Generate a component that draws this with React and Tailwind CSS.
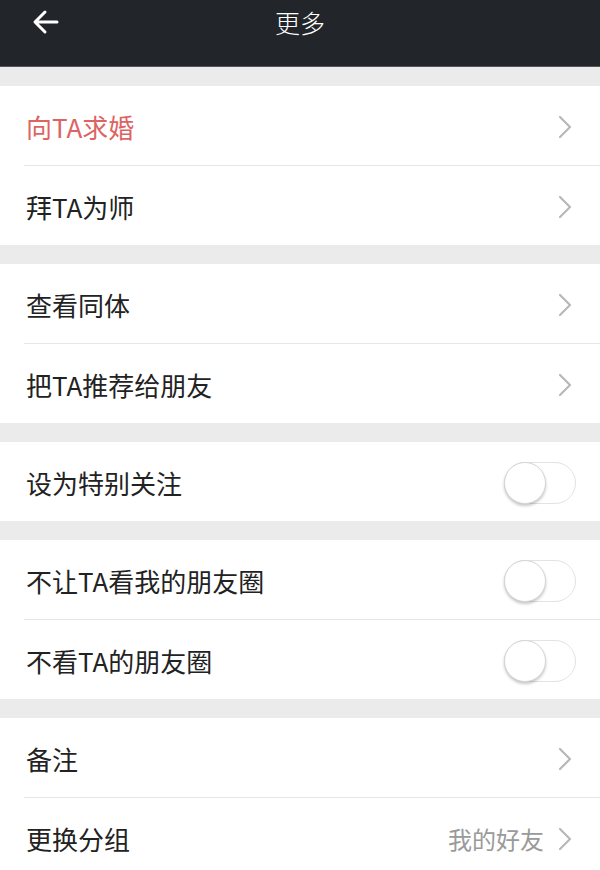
import React, { useState } from "react";

const FONT = { fontFamily: '"Noto Sans CJK SC", "Noto Sans", sans-serif' };

const Chevron = () => (
  <svg width="14" height="24" viewBox="0 0 14 24" className="flex-shrink-0">
    <path d="M2 2 L12 12 L2 22" fill="none" stroke="#b8b8b8" strokeWidth="2.2" strokeLinecap="round" strokeLinejoin="round" />
  </svg>
);

const Toggle = ({ on, onClick }) => (
  <button
    onClick={onClick}
    className={`relative w-[72px] h-[42px] rounded-full border border-[#e3e3e3] transition-all ${on ? "bg-[#4cd964]" : "bg-white"}`}
  >
    <span
      className={`absolute top-[-1px] w-[42px] h-[42px] rounded-full bg-white border border-[#d6d6d6] shadow-[0_2px_3px_rgba(0,0,0,0.22)] transition-all ${on ? "left-[29px]" : "left-[-1px]"}`}
    />
  </button>
);

const Row = ({ label, red, value, toggle, divider }) => {
  const [on, setOn] = useState(false);
  return (
    <div className="bg-white">
      {divider && <div className="ml-6 h-px bg-[#e6e6e6]" />}
      <div className="h-[79px] flex items-center justify-between pl-[26px] pr-6 pt-[3px]">
        <span className={`text-[26px] leading-none ${red ? "text-[#dc6463]" : "text-[#222]"}`}>{label}</span>
        {toggle ? (
          <Toggle on={on} onClick={() => setOn(!on)} />
        ) : (
          <div className="flex items-center gap-[14px] mr-[4px]">
            {value && <span className="text-[24px] leading-none text-[#9a9a9a]">{value}</span>}
            <Chevron />
          </div>
        )}
      </div>
    </div>
  );
};

const Gap = () => <div className="h-[19px] bg-[#ebebeb]" />;

export default function App() {
  return (
    <div className="w-[600px] h-[870px] overflow-hidden bg-[#ebebeb]" style={FONT}>
      {/* Header */}
      <div className="h-[67px] bg-[#22262a] relative flex justify-center border-b border-[#555]">
        <svg width="28" height="28" viewBox="0 0 28 28" className="absolute left-[32px] top-[8px]">
          <path d="M25 14 H4 M13 4 L3 14 L13 24" fill="none" stroke="#fff" strokeWidth="3" strokeLinecap="round" strokeLinejoin="round" />
        </svg>
        <span className="text-white text-[25px] font-light leading-none mt-[10px]">更多</span>
      </div>
      <Gap />
      <Row label="向TA求婚" red />
      <Row label="拜TA为师" divider />
      <Gap />
      <Row label="查看同体" />
      <Row label="把TA推荐给朋友" divider />
      <Gap />
      <Row label="设为特别关注" toggle />
      <Gap />
      <Row label="不让TA看我的朋友圈" toggle />
      <Row label="不看TA的朋友圈" toggle divider />
      <Gap />
      <Row label="备注" />
      <Row label="更换分组" value="我的好友" divider />
    </div>
  );
}
